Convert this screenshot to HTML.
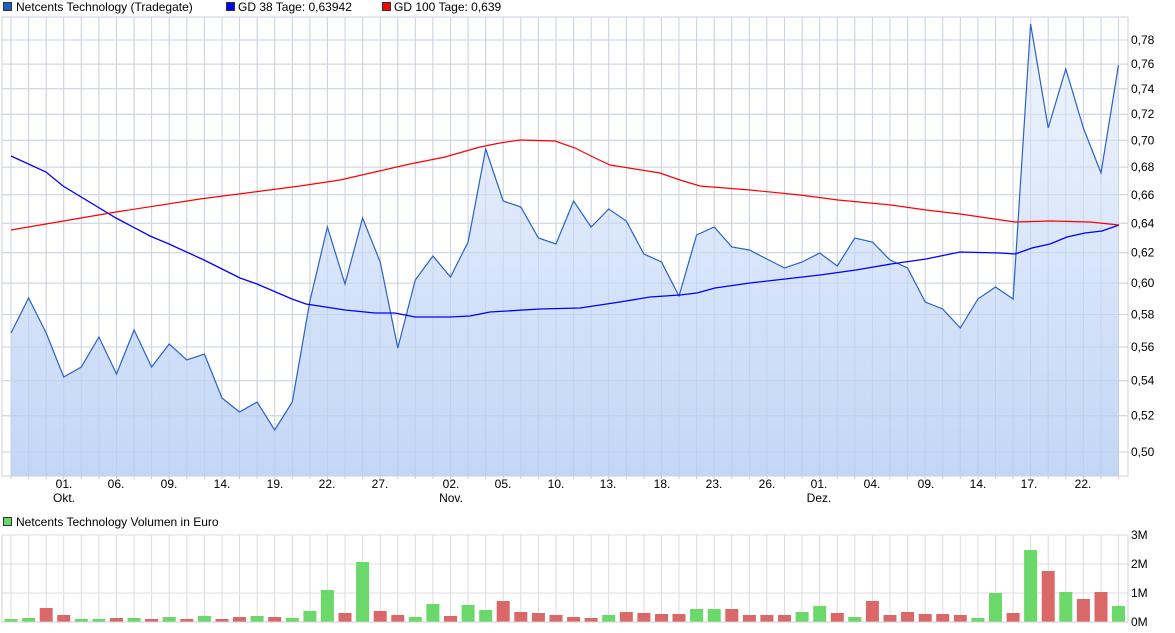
<!DOCTYPE html>
<html><head><meta charset="utf-8"><style>
body{margin:0;background:#fff;width:1175px;height:633px;overflow:hidden;font-family:"Liberation Sans",sans-serif}
svg{display:block}
</style></head><body>
<svg id="s" width="1175" height="633" xmlns="http://www.w3.org/2000/svg" font-family="Liberation Sans, sans-serif" font-size="12"></svg>
<script>
const s=document.getElementById('s');let h='';
const X=i=>11+17.58*i;
const L=2,R=1128,T=17,B=476;
h+='<defs><linearGradient id="g" x1="0" y1="0" x2="0" y2="1"><stop offset="0" stop-color="#f0f5fd"/><stop offset="1" stop-color="#bfd4f6"/></linearGradient></defs>';
// legends
h+='<rect x="3.5" y="2.5" width="8" height="8" fill="#1f5fc4" stroke="#333" stroke-width="1"/><text x="16" y="11">Netcents Technology (Tradegate)</text>';
h+='<rect x="226.5" y="2.5" width="8" height="8" fill="#0000ff" stroke="#333"/><text x="238" y="11">GD 38 Tage: 0,63942</text>';
h+='<rect x="382.5" y="2.5" width="8" height="8" fill="#ff0000" stroke="#333"/><text x="394" y="11">GD 100 Tage: 0,639</text>';
h+='<rect x="3.5" y="517.5" width="8" height="8" fill="#6ad96a" stroke="#333"/><text x="16" y="526">Netcents Technology Volumen in Euro</text>';
// price grid
let g='';
for(let i=0;i<64;i++){g+=`M${X(i).toFixed(1)} ${T}V${B}`;}
const labs=['0,78','0,76','0,74','0,72','0,70','0,68','0,66','0,64','0,62','0,60','0,58','0,56','0,54','0,52','0,50'];
labs.forEach(l=>{const v=parseFloat(l.replace(',','.'));const y=40+926.6*(Math.log(0.78)-Math.log(v));g+=`M${L} ${y.toFixed(1)}H${R}`;h+=`<text x="1131" y="${(y+4).toFixed(1)}">${l}</text>`;});
g+=`M${L} ${T}H${R}`;
h+=`<path d="${g}" stroke="#dcdcdc" stroke-width="1" fill="none"/>`;
// price
const py=[333,298,333,377,367,337,374,330,367,344,360,354,398,412,402,430,402,301,227,284,218,262,348,280,256,277,242,149,201,207,238,244,201,227,209,221,254,262,296,235,227,247,250,259,268,262,253,266,238,242,260,268,302,309,328,299,287,299,24,128,69,128,173,65];
let pts=py.map((y,i)=>X(i).toFixed(1)+','+y).join(' ');
h+=`<polygon points="${X(0)},${B} ${pts} ${X(63)},${B}" fill="url(#g)" opacity="0.95"/>`;
// redraw grid faintly over fill
h+=`<path d="${g}" stroke="#b8c8e4" stroke-width="1" fill="none" opacity="0.5"/>`;
h+=`<polyline points="${pts}" fill="none" stroke="#2a62c8" stroke-width="1.2"/>`;
const blue=[[11,156],[46,172],[63,186],[116,218],[150,236],[169,244],[204,260],[240,278],[257,284],[292,299],[306,304],[345,310],[375,313],[395,313],[415,317],[450,317],[470,316],[490,312],[540,309],[580,308],[620,302],[650,297],[680,295],[697,293],[715,288],[750,283],[785,279],[820,275],[856,270],[891,264],[926,259],[960,252],[1000,253],[1015,254],[1032,248],[1050,244],[1067,237],[1085,233],[1102,231],[1119,225]];
h+=`<polyline points="${blue.map(p=>p.join(',')).join(' ')}" fill="none" stroke="#0000ff" stroke-width="1.3"/>`;
const red=[[11,230],[116,212],[200,199],[300,186],[340,180],[375,172],[410,164],[445,157],[480,147],[500,143],[520,140],[555,141],[575,148],[595,158],[610,165],[660,173],[680,180],[700,186],[750,190],[800,195],[838,200],[891,205],[926,210],[960,214],[1015,222],[1050,221],[1090,222],[1119,225]];
h+=`<polyline points="${red.map(p=>p.join(',')).join(' ')}" fill="none" stroke="#ff0000" stroke-width="1.2"/>`;
h+=`<path d="M${L} ${T}V${B}H${R}V${T}" stroke="#d0d0d0" fill="none"/>`;
// ticks & x labels
let tk='';for(let i=0;i<64;i++)tk+=`M${X(i).toFixed(1)} ${B}v3`;
h+=`<path d="${tk}" stroke="#ccc"/>`;
const xl=[[64,'01.','Okt.'],[116,'06.'],[169,'09.'],[222,'14.'],[275,'19.'],[327,'22.'],[380,'27.'],[451,'02.','Nov.'],[503,'05.'],[556,'10.'],[608,'13.'],[662,'18.'],[714,'23.'],[767,'26.'],[819,'01.','Dez.'],[872,'04.'],[926,'09.'],[978,'14.'],[1029,'17.'],[1083,'22.']];
xl.forEach(a=>{h+=`<text x="${a[0]}" y="488" text-anchor="middle">${a[1]}</text>`;if(a[2])h+=`<text x="${a[0]}" y="502" text-anchor="middle">${a[2]}</text>`;});
// volume
const VT=535,VB=622;let vg='';
for(let i=0;i<64;i++)vg+=`M${X(i).toFixed(1)} ${VT}V${VB}`;
[535,564,593].forEach(y=>vg+=`M${L} ${y}H${R}`);
h+=`<path d="${vg}" stroke="#dcdcdc" fill="none"/>`;
[['3M',535],['2M',564],['1M',593],['0M',622]].forEach(a=>h+=`<text x="1131" y="${a[1]+4}">${a[0]}</text>`);
const vol=[['g',3],['g',4],['r',14],['r',7],['g',3],['g',3],['r',4],['g',4],['r',3],['g',5],['r',3],['g',6],['r',3],['r',5],['g',6],['r',5],['g',4],['g',11],['g',32],['r',9],['g',60],['r',11],['r',7],['g',5],['g',18],['r',6],['g',17],['g',12],['r',21],['r',10],['r',9],['r',7],['r',5],['r',4],['g',7],['r',10],['r',9],['r',8],['r',8],['g',13],['g',13],['r',13],['r',7],['r',7],['r',7],['g',10],['g',16],['r',9],['g',5],['r',21],['r',7],['r',10],['r',8],['r',8],['r',7],['g',4],['g',29],['r',9],['g',72],['r',51],['g',30],['r',23],['r',30],['g',16]];
vol.forEach((v,i)=>{h+=`<rect x="${(X(i)-6.5).toFixed(1)}" y="${VB-v[1]}" width="13" height="${v[1]}" fill="${v[0]=='g'?'#6ad96a':'#db6868'}"/>`;});
h+=`<path d="M${L} ${VT}V${VB}H${R}V${VT}" stroke="#d0d0d0" fill="none"/>`;
s.innerHTML=h;
</script>
</body></html>
